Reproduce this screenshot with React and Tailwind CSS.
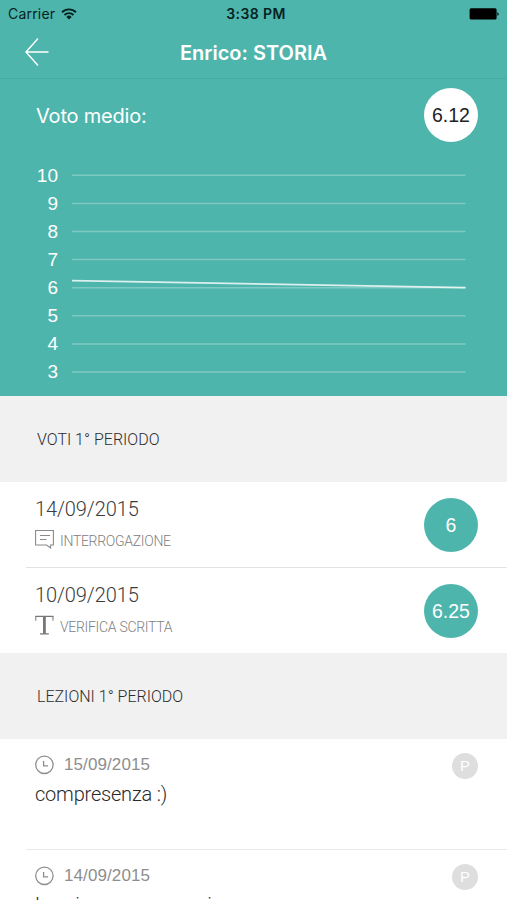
import { Fragment } from 'react';

const TEAL = '#4eb5ac';

const scale = [10, 9, 8, 7, 6, 5, 4, 3];

const grades = [
  { date: '14/09/2015', type: 'INTERROGAZIONE', icon: 'oral', value: '6' },
  { date: '10/09/2015', type: 'VERIFICA SCRITTA', icon: 'written', value: '6.25' },
];

const lessons = [
  { date: '15/09/2015', text: 'compresenza :)' },
  { date: '14/09/2015', text: 'Lessico e nuove voci' },
];

const WifiIcon = () => (
  <svg width="16" height="12" viewBox="0 0 16 12" fill="none" stroke="#06231f" strokeWidth="1.9">
    <path d="M1 4.2a10 10 0 0 1 14 0" />
    <path d="M3.5 7a6.4 6.4 0 0 1 9 0" />
    <path d="M8 11.5 5.4 8.9a3.7 3.7 0 0 1 5.2 0z" fill="#06231f" stroke="none" />
  </svg>
);

const BatteryIcon = () => (
  <svg width="30" height="12" viewBox="0 0 30 12" fill="#000">
    <rect x="0.6" y="0.3" width="27" height="11.2" rx="1.5" />
    <path d="M28.4 4.2c1.6.3 1.6 3.3 0 3.6z" />
  </svg>
);

const BackIcon = () => (
  <svg width="24" height="28" viewBox="0 0 24 28" fill="none" stroke="#fff" strokeWidth="1.4">
    <path d="M13 .5 1 14l12 13.5M1 14h22.5" />
  </svg>
);

const OralIcon = () => (
  <svg width="20" height="20" viewBox="0 0 20 20" fill="none" stroke="#8a8a8a" strokeWidth="1.1">
    <path d="M.6 1.5h17.8V16h-2.8v3l-4-3H.6z" />
    <path d="M5 6.5h10M5 10.5h6.5" />
  </svg>
);

const WrittenIcon = () => (
  <svg width="20" height="20" viewBox="0 0 20 20" fill="none" stroke="#777">
    <path d="M.4 1.4h18M5 18.8h8.8" strokeWidth="1.3" />
    <path d="M.8 1.2v4.5M18 1.2v4.5" strokeWidth="1" />
    <path d="M9.4 1.2v17.6" strokeWidth="2.8" />
  </svg>
);

const ClockIcon = () => (
  <svg width="20" height="20" viewBox="0 0 20 20" fill="none" stroke="#8e8e8e" strokeWidth="1.3">
    <circle cx="9.4" cy="9.8" r="8.7" />
    <path d="M8.6 6v4.9h4.4" />
  </svg>
);

const SectionTitle = ({ children }) => (
  <h2 className="flex h-[86px] items-center bg-[#f1f1f1] pt-[2px] pl-[37px] text-[16px] font-light text-[#2c2c2c]">
    {children}
  </h2>
);

// Average trend, one unit of grade is 28px tall
const Chart = () => (
  <div className="flex h-[225px] pl-[35px]">
    <div className="w-[23px] pt-px text-right font-['Liberation_Sans'] text-[19px] leading-[28px] text-white">
      {scale.map((n) => (
        <div key={n}>{n}</div>
      ))}
    </div>
    <svg className="ml-[14px]" width="394" height="225" viewBox="0 0 394 225" fill="none">
      {scale.map((n, i) => (
        <path key={n} d={`M0 ${14.3 + i * 28.1}H393.5`} stroke="#fff" strokeOpacity="0.28" strokeWidth="1.5" />
      ))}
      <path d="M0 119.6 393.5 126.6" stroke="#fff" strokeOpacity="0.8" strokeWidth="1.6" />
    </svg>
  </div>
);

const App = () => (
  <div className="h-[900px] w-full overflow-hidden bg-white font-['Roboto',sans-serif]">
    <div className="h-[396px] text-white" style={{ backgroundColor: TEAL }}>
      <div className="grid h-[27px] grid-cols-3 items-center px-2 font-['Inter',sans-serif] text-[14px] text-[#06231f]">
        <div className="flex items-center gap-[6px] tracking-[0.2px]">
          Carrier
          <WifiIcon />
        </div>
        <div className="pl-[5px] text-center text-[14px] font-semibold tracking-[0.4px]">3:38 PM</div>
        <div className="flex justify-end">
          <BatteryIcon />
        </div>
      </div>

      <header className="grid h-[52px] grid-cols-[80px_1fr_80px] items-center border-b border-[#49aaa2] pb-px font-['Inter',sans-serif]">
        <div className="pl-[25px]">
          <BackIcon />
        </div>
        <h1 className="pt-px text-center text-[20px] font-semibold">Enrico: STORIA</h1>
      </header>

      <div className="flex h-[82px] items-start justify-between pr-[29px] pl-[36px]">
        <span className="pt-[23px] font-['Inter',sans-serif] text-[20px] leading-[28px] tracking-[-0.2px]">
          Voto medio:
        </span>
        <span className="mt-[9px] flex size-[54px] items-center justify-center rounded-full bg-white pt-[2px] font-['Liberation_Sans'] text-[19.5px] text-[#222]">
          6.12
        </span>
      </div>

      <Chart />
    </div>

    <SectionTitle>VOTI 1° PERIODO</SectionTitle>
    <ul>
      {grades.map((g, i) => (
        <Fragment key={g.date}>
          {i > 0 && <li className="ml-[26px] h-px bg-[#e2e2e2]" />}
          <li className="flex h-[85px] items-center justify-between pr-[29px] pl-[35px]">
            <div>
              <div className="text-[20px] leading-[26px] font-light tracking-[-0.1px] text-[#3c3c3c]">{g.date}</div>
              <div className="mt-[6px] flex items-center gap-[5px] text-[14px] leading-[24px] font-light tracking-[-0.3px] text-[#808080]">
                <span className="-mt-[3px]">{g.icon === 'oral' ? <OralIcon /> : <WrittenIcon />}</span>
                <span className="pt-px">{g.type}</span>
              </div>
            </div>
            <span
              className="flex size-[54px] items-center justify-center rounded-full pt-[2px] font-['Liberation_Sans'] text-[19.5px] text-white"
              style={{ backgroundColor: TEAL }}
            >
              {g.value}
            </span>
          </li>
        </Fragment>
      ))}
    </ul>

    <SectionTitle>LEZIONI 1° PERIODO</SectionTitle>
    <ul>
      {lessons.map((l, i) => (
        <Fragment key={l.date}>
          {i > 0 && <li className="ml-[26px] h-px bg-[#e8e8e8]" />}
          <li className="flex h-[110px] items-start justify-between pt-[13px] pr-[29px] pl-[35px]">
            <div>
              <div className="flex items-center gap-[9px] font-['Liberation_Sans'] text-[17px] leading-[26px] tracking-[0.1px] text-[#8e8e8e]">
                <ClockIcon />
                {l.date}
              </div>
              <div className="mt-[2px] text-[20px] leading-[28px] font-light tracking-[-0.2px] text-[#2a2a2a]">{l.text}</div>
            </div>
            <span className="mt-px flex size-[26px] items-center justify-center rounded-full bg-[#dedede] pt-px font-['Liberation_Sans'] text-[15px] text-white">
              P
            </span>
          </li>
        </Fragment>
      ))}
    </ul>
  </div>
);

export default App;
